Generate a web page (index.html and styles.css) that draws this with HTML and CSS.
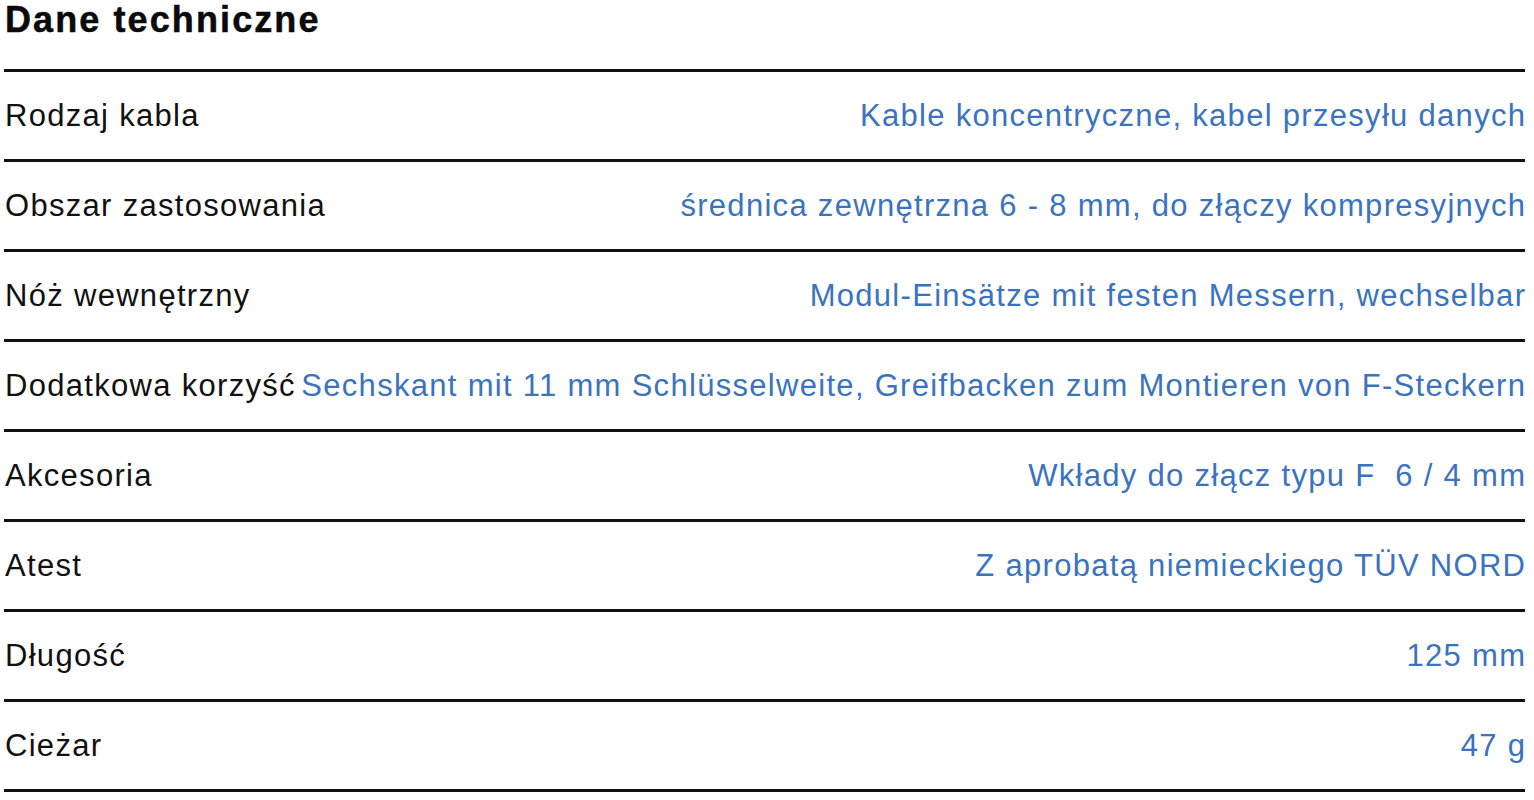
FILE: index.html
```html
<!DOCTYPE html>
<html lang="pl">
<head>
<meta charset="utf-8">
<title>Dane techniczne</title>
<link rel="stylesheet" href="styles.css">
</head>
<body>
<section class="specs">
  <h2 class="specs-title">Dane techniczne</h2>
  <div class="specs-table">
    <div class="row"><span class="label">Rodzaj kabla</span><span class="value">Kable koncentryczne, kabel przesyłu danych</span></div>
    <div class="row"><span class="label">Obszar zastosowania</span><span class="value">średnica zewnętrzna 6 - 8 mm, do złączy kompresyjnych</span></div>
    <div class="row"><span class="label">Nóż wewnętrzny</span><span class="value">Modul-Einsätze mit festen Messern, wechselbar</span></div>
    <div class="row"><span class="label">Dodatkowa korzyść</span><span class="value">Sechskant mit 11 mm Schlüsselweite, Greifbacken zum Montieren von F-Steckern</span></div>
    <div class="row"><span class="label">Akcesoria</span><span class="value">Wkłady do złącz typu F&nbsp; 6 / 4 mm</span></div>
    <div class="row"><span class="label">Atest</span><span class="value">Z aprobatą niemieckiego TÜV NORD</span></div>
    <div class="row"><span class="label">Długość</span><span class="value">125 mm</span></div>
    <div class="row"><span class="label">Cieżar</span><span class="value">47 g</span></div>
  </div>
</section>
</body>
</html>
```
FILE: styles.css
```css
html, body {
  margin: 0;
  padding: 0;
  background: #ffffff;
}
body {
  font-family: "Liberation Sans", Arial, Helvetica, sans-serif;
  color: #111111;
}
.specs {
  width: 1521px;
  padding-left: 4px;
}
.specs-title {
  margin: 0;
  height: 69px;
  padding-left: 1px;
  font-size: 36px;
  font-weight: bold;
  line-height: 40px;
  letter-spacing: 2.1px;
  -webkit-text-stroke: 0.5px #0a0a0a;
  color: #0a0a0a;
}
.specs-table {
  display: flex;
  flex-direction: column;
}
.row {
  display: flex;
  justify-content: space-between;
  align-items: center;
  gap: 3px;
  height: 87px;
  border-top: 3px solid #111111;
  font-size: 31px;
  letter-spacing: 1.3px;
  white-space: nowrap;
}
.row:last-child {
  border-bottom: 3px solid #111111;
}
.label {
  padding-left: 1px;
  color: #111111;
}
.value {
  color: #3a73c0;
  text-align: right;
  margin-right: -1.3px;
}
```
